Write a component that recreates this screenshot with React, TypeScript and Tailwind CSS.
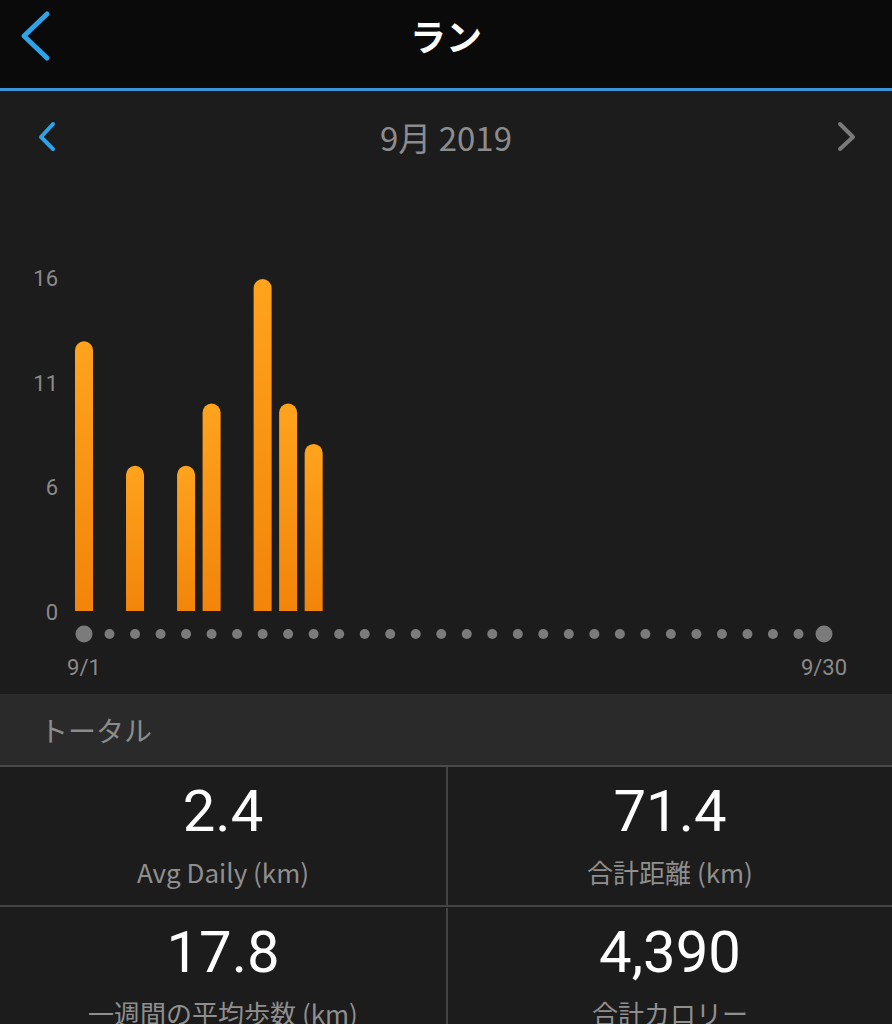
import React from "react";

const FONT = "Roboto, 'Noto Sans CJK JP', sans-serif";
const JP = "'Noto Sans CJK JP', Roboto, sans-serif";

const data: Record<number, number> = { 1: 13, 3: 7, 5: 7, 6: 10, 8: 16, 9: 10, 10: 8.05 };

function Chart() {
  const base = 428;
  const scale = 20.75;
  const x0 = 84;
  const step = (824 - 84) / 29;
  const days = Array.from({ length: 30 }, (_, i) => i + 1);
  const yLabels = [
    { v: 16, y: 95 },
    { v: 11, y: 200 },
    { v: 6, y: 304 },
    { v: 0, y: 429 },
  ];
  return (
    <svg width="892" height="511" viewBox="0 0 892 511" className="block">
      <defs>
        <linearGradient id="bar" x1="0" y1="0" x2="0" y2="1">
          <stop offset="0" stopColor="#ffa31d" />
          <stop offset="1" stopColor="#f2850a" />
        </linearGradient>
      </defs>
      {yLabels.map((l) => (
        <text
          key={l.v}
          x="58"
          y={l.y}
          textAnchor="end"
          dominantBaseline="central"
          fill="#8a8a8a"
          fontSize="22"
          fontFamily={FONT}
        >
          {l.v}
        </text>
      ))}
      {days.map((d) => {
        const v = data[d];
        if (!v) return null;
        const cx = x0 + (d - 1) * step;
        const top = base - v * scale;
        return (
          <path
            key={d}
            d={`M ${cx - 9} ${base} V ${top + 9} A 9 9 0 0 1 ${cx + 9} ${top + 9} V ${base} Z`}
            fill="url(#bar)"
          />
        );
      })}
      {days.map((d) => {
        const cx = x0 + (d - 1) * step;
        const big = d === 1 || d === 30;
        return <circle key={d} cx={cx} cy={451} r={big ? 8.5 : 5} fill="#7b7b7b" />;
      })}
      <text x="84" y="484" textAnchor="middle" dominantBaseline="central" fill="#8a8a8a" fontSize="22" fontFamily={FONT}>
        9/1
      </text>
      <text x="824" y="484" textAnchor="middle" dominantBaseline="central" fill="#8a8a8a" fontSize="22" fontFamily={FONT}>
        9/30
      </text>
    </svg>
  );
}

function Cell({ value, label, right }: { value: string; label: string; right?: boolean }) {
  return (
    <div
      className={`flex flex-col items-center h-[138px] ${right ? "border-l-2 border-[#444444]" : ""}`}
    >
      <div className="text-[58px] leading-none text-white mt-[15px]" style={{ fontFamily: FONT }}>
        {value}
      </div>
      <div className="text-[26px] leading-none text-[#8f8f8f] mt-[19px] whitespace-nowrap" style={{ fontFamily: JP }}>
        {label}
      </div>
    </div>
  );
}

export default function App() {
  return (
    <div className="w-[892px] h-[1024px] overflow-hidden bg-[#1c1c1c]" style={{ fontFamily: FONT }}>
      {/* Header */}
      <div className="relative h-[88px] bg-[#0a0a0a] flex items-center justify-center">
        <svg className="absolute left-0 top-0" width="70" height="88" viewBox="0 0 70 88">
          <path d="M47 14 L24 36 L47 58" fill="none" stroke="#2ea3e8" strokeWidth="5" strokeLinecap="round" strokeLinejoin="round" />
        </svg>
        <div className="text-white text-[36px] font-bold leading-none -mt-[18px]" style={{ fontFamily: JP }}>
          ラン
        </div>
      </div>
      <div className="h-[3px] bg-[#3a94d6]" />

      {/* Month nav */}
      <div className="h-[92px] flex items-center justify-between">
        <svg width="70" height="92" viewBox="0 0 70 92">
          <path d="M53 33 L41 46 L53 58" fill="none" stroke="#2ea3e8" strokeWidth="4" strokeLinecap="round" strokeLinejoin="round" />
        </svg>
        <div className="text-[33px] text-[#8c8c8c] leading-none" style={{ fontFamily: JP }}>
          9月 2019
        </div>
        <svg width="70" height="92" viewBox="0 0 70 92">
          <path d="M18 33 L31 46 L18 58" fill="none" stroke="#7a7a7a" strokeWidth="4" strokeLinecap="round" strokeLinejoin="round" />
        </svg>
      </div>

      {/* Chart */}
      <Chart />

      {/* Totals header */}
      <div className="h-[73px] bg-[#2a2a2a] flex items-center pl-[40px] border-b-2 border-[#4a4a4a]">
        <div className="text-[28px] text-[#8c8c8c] leading-none" style={{ fontFamily: JP }}>
          トータル
        </div>
      </div>

      {/* Grid */}
      <div className="grid grid-cols-2">
        <Cell value="2.4" label="Avg Daily (km)" />
        <Cell value="71.4" label="合計距離 (km)" right />
      </div>
      <div className="h-[2px] bg-[#444444]" />
      <div className="grid grid-cols-2 pt-[1px]">
        <Cell value="17.8" label="一週間の平均歩数 (km)" />
        <Cell value="4,390" label="合計カロリー" right />
      </div>
    </div>
  );
}
